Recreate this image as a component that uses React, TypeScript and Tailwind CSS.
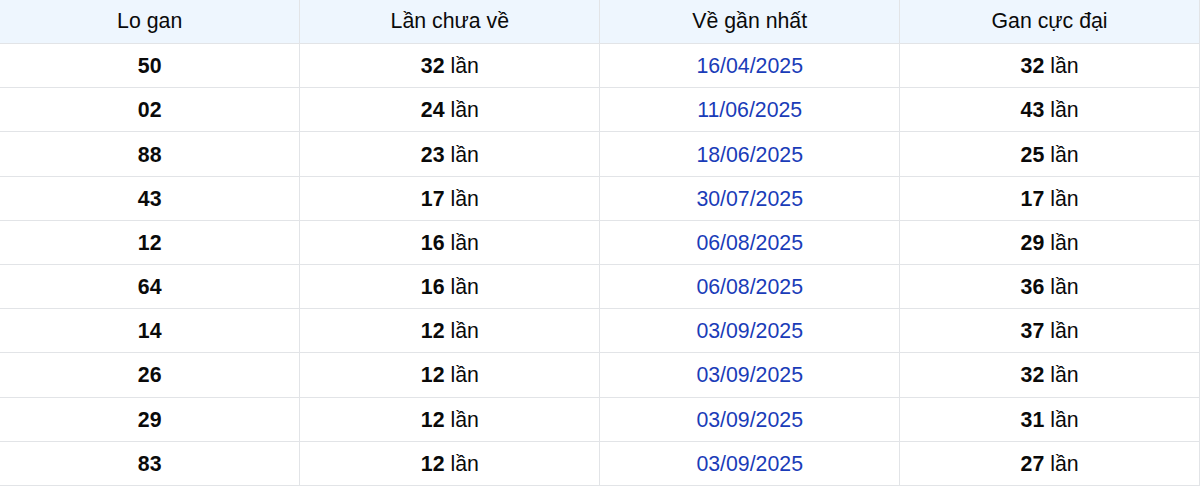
import React from "react";

const rows: [string, string, string, string][] = [
  ["50", "32", "16/04/2025", "32"],
  ["02", "24", "11/06/2025", "43"],
  ["88", "23", "18/06/2025", "25"],
  ["43", "17", "30/07/2025", "17"],
  ["12", "16", "06/08/2025", "29"],
  ["64", "16", "06/08/2025", "36"],
  ["14", "12", "03/09/2025", "37"],
  ["26", "12", "03/09/2025", "32"],
  ["29", "12", "03/09/2025", "31"],
  ["83", "12", "03/09/2025", "27"],
];

export default function App() {
  return (
    <div className="w-[1200px] h-[487px] overflow-hidden bg-white" style={{ fontFamily: '"Liberation Sans", Arial, sans-serif' }}>
      <table className="w-[1200px] border-collapse table-fixed text-[21.3px] text-[#0a0a0a]">
        <thead>
          <tr className="h-[43.5px] bg-[#eef6fe]">
            {["Lo gan", "Lần chưa về", "Về gần nhất", "Gan cực đại"].map((h) => (
              <th key={h} className="font-normal text-center border-b-[1.5px] border-r-[1.5px] border-[#e2e4e7] pt-[1px] align-middle">
                {h}
              </th>
            ))}
          </tr>
        </thead>
        <tbody>
          {rows.map((r, i) => (
            <tr key={i} className="h-[44.2px]">
              <td className="text-center font-bold border-b-[1.5px] border-r-[1.5px] border-[#e2e4e7] pt-[3px]">{r[0]}</td>
              <td className="text-center border-b-[1.5px] border-r-[1.5px] border-[#e2e4e7] pt-[3px]">
                <b>{r[1]}</b> lần
              </td>
              <td className="text-center text-[#1a3cb8] border-b-[1.5px] border-r-[1.5px] border-[#e2e4e7] pt-[3px]">{r[2]}</td>
              <td className="text-center border-b-[1.5px] border-r-[1.5px] border-[#e2e4e7] pt-[3px]">
                <b>{r[3]}</b> lần
              </td>
            </tr>
          ))}
        </tbody>
      </table>
    </div>
  );
}
